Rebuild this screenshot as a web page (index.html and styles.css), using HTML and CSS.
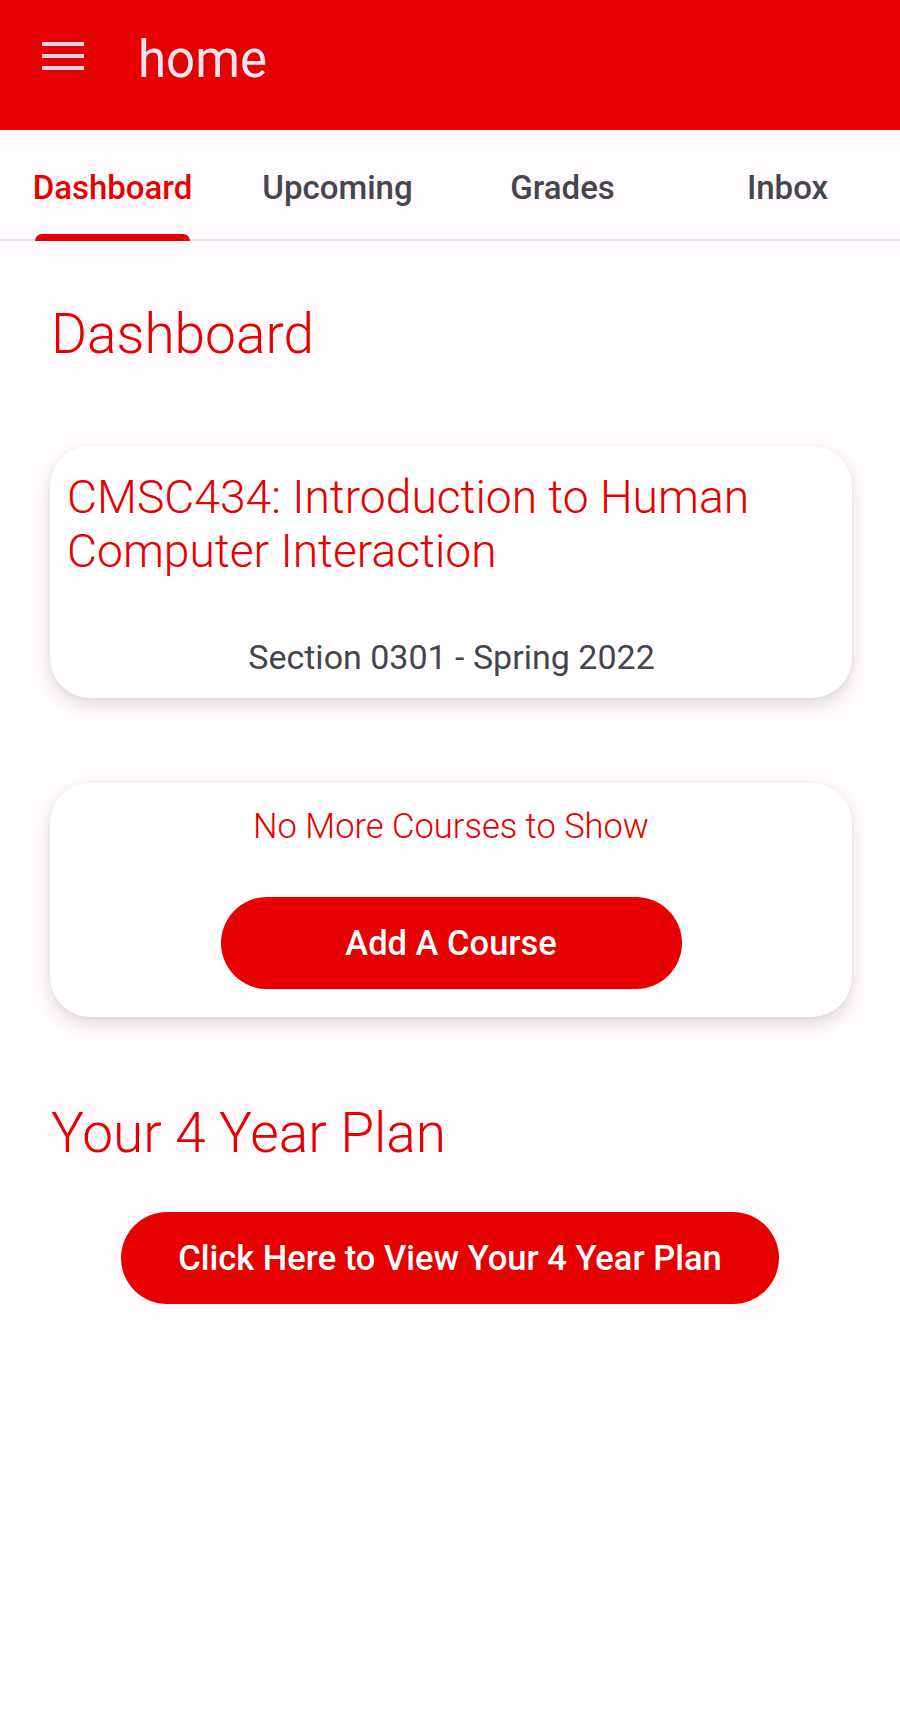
FILE: index.html
```html
<!DOCTYPE html>
<html lang="en">
<head>
<meta charset="utf-8">
<title>home</title>
<link rel="stylesheet" href="styles.css">
</head>
<body>
<header class="appbar">
  <svg class="menu-icon" width="42" height="28" viewBox="0 0 42 28" aria-hidden="true">
    <rect x="0" y="0" width="42" height="4" fill="#d3d5e0"/>
    <rect x="0" y="12" width="42" height="4" fill="#d3d5e0"/>
    <rect x="0" y="24" width="42" height="4" fill="#d3d5e0"/>
  </svg>
  <h1 class="appbar-title">home</h1>
</header>
<nav class="tabs">
  <div class="tab active"><div class="tab-inner"><span class="tab-label">Dashboard</span><span class="tab-indicator"></span></div></div>
  <div class="tab"><div class="tab-inner"><span class="tab-label">Upcoming</span></div></div>
  <div class="tab"><div class="tab-inner"><span class="tab-label">Grades</span></div></div>
  <div class="tab"><div class="tab-inner"><span class="tab-label">Inbox</span></div></div>
</nav>
<main class="content">
  <h2 class="section-title dash-title">Dashboard</h2>
  <section class="card course-card">
    <h3 class="course-title">CMSC434: Introduction to Human Computer Interaction</h3>
    <p class="course-meta">Section 0301 - Spring 2022</p>
  </section>
  <section class="card empty-card">
    <p class="empty-text">No More Courses to Show</p>
    <button class="pill-btn add-btn">Add A Course</button>
  </section>
  <h2 class="section-title plan-title">Your 4 Year Plan</h2>
  <div class="plan-row">
    <button class="pill-btn plan-btn">Click Here to View Your 4 Year Plan</button>
  </div>
</main>
</body>
</html>
```
FILE: styles.css
```css
* { box-sizing: border-box; }
html, body { margin: 0; padding: 0; }
body {
  background: #fffbfe;
  font-family: Roboto, "Noto Sans", "Liberation Sans", sans-serif;
  min-height: 1711px;
}
.appbar {
  height: 130px;
  background: #e60000;
  display: flex;
  align-items: flex-start;
  padding-left: 42px;
}
.menu-icon { margin-top: 42px; flex: none; }
.appbar-title {
  margin: 35px 0 0 54px;
  font-size: 51px;
  line-height: 50px;
  font-weight: 400;
  color: #e8e6ee;
}
.tabs {
  display: grid;
  grid-template-columns: repeat(4, 1fr);
  height: 111px;
  border-bottom: 2px solid #e7e0ec;
  background: #fffbfe;
}
.tab {
  display: flex;
  justify-content: center;
  height: 109px;
}
.tab-inner {
  display: flex;
  flex-direction: column;
  padding-top: 41px;
  height: 100%;
}
.tab-label {
  font-size: 33px;
  line-height: 33px;
  font-weight: 500;
  color: #46454f;
  white-space: nowrap;
}
.tab.active .tab-label { color: #e60000; }
.tab-indicator {
  margin: auto 2px -2px;
  height: 7px;
  background: #e60000;
  border-radius: 7px 7px 0 0;
}
.content {
  padding: 0 48px 0 50px;
}
.section-title {
  margin: 0 0 0 1px;
  font-size: 55px;
  line-height: 56px;
  font-weight: 300;
  color: #e60000;
}
.dash-title { margin-top: 65px; }
.card {
  background: #ffffff;
  border-radius: 40px;
  box-shadow: 0 7px 16px rgba(60, 40, 60, 0.15), 0 1px 4px rgba(60, 40, 60, 0.06);
}
.course-card {
  margin-top: 84px;
  height: 252px;
  padding: 24px 16px 24px 17px;
  display: flex;
  flex-direction: column;
}
.course-title {
  margin: 0;
  font-size: 46.2px;
  line-height: 54px;
  font-weight: 300;
  color: #e60000;
}
.course-meta {
  margin: auto 0 0;
  text-align: center;
  font-size: 34px;
  line-height: 34px;
  color: #45444f;
}
.empty-card {
  margin-top: 85px;
  height: 234px;
  padding: 26px 16px 28px;
  display: flex;
  flex-direction: column;
  align-items: center;
}
.empty-text {
  margin: 0;
  font-size: 34.5px;
  line-height: 34px;
  font-weight: 300;
  color: #e60000;
}
.pill-btn {
  border: 0;
  background: #e60000;
  color: #ffffff;
  font-family: inherit;
  font-size: 34.5px;
  font-weight: 500;
  height: 92px;
  border-radius: 46px;
  padding: 0;
  cursor: pointer;
}
.add-btn {
  margin-top: auto;
  width: 461px;
}
.plan-title { margin-top: 88px; }
.plan-row {
  display: flex;
  justify-content: center;
  margin-top: 51px;
  padding-right: 2px;
}
.plan-btn { width: 658px; }
```
